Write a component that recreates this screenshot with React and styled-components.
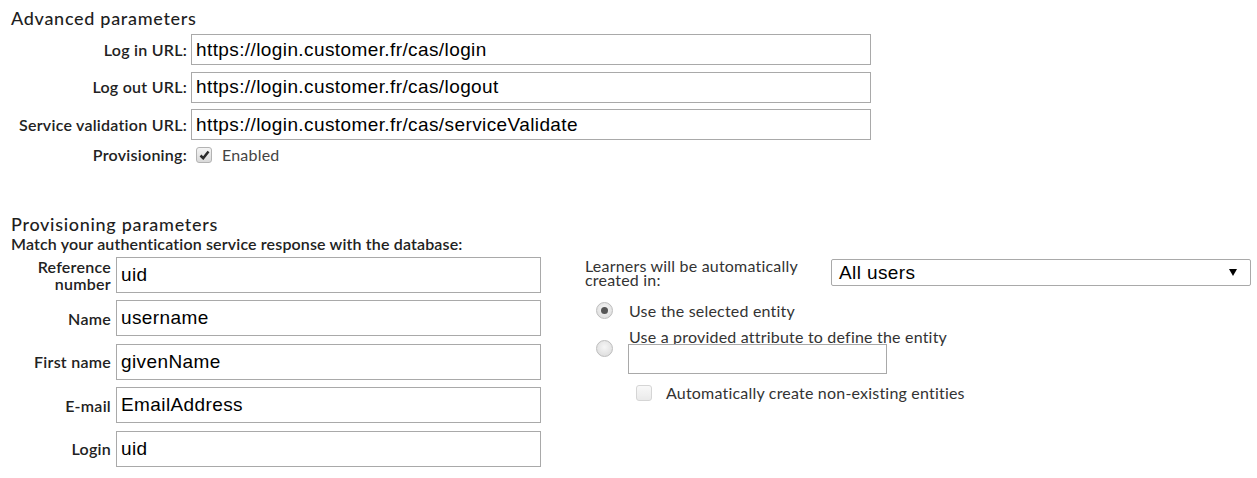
import React from "react";
import styled, { createGlobalStyle } from "styled-components";

const GlobalStyle = createGlobalStyle`
  body {
    margin: 0;
    background: #fff;
    font-family: Lato, "Liberation Sans", sans-serif;
    color: #222;
  }
`;

const Page = styled.div`
  padding: 8px 6px 0 11px;
  width: 1240px;
  box-sizing: border-box;
`;

const Heading = styled.div`
  font-size: 18px;
  font-weight: 500;
  line-height: 21px;
  letter-spacing: 0.7px;
  color: #1e1e1e;
`;

const SubHeading = styled.div`
  font-size: 16px;
  line-height: 17px;
  font-weight: 600;
  letter-spacing: 0.15px;
  color: #222;
`;

const TopForm = styled.div`
  display: grid;
  grid-template-columns: 176px 680px;
  column-gap: 4px;
  row-gap: 6.5px;
  margin-top: 5px;
  align-items: center;
`;

const Label = styled.label`
  font-size: 16px;
  font-weight: 600;
  letter-spacing: 0.25px;
  color: #222;
  text-align: right;
  line-height: ${(p) => p.$lh || 16}px;
`;

const TextInput = styled.input`
  box-sizing: border-box;
  width: 100%;
  height: ${(p) => p.$h || 31}px;
  border: 1px solid #a9a9a9;
  padding: 0 4px;
  margin: 0;
  font-family: Arial, "Liberation Sans", sans-serif;
  font-size: 19px;
  letter-spacing: 0.4px;
  color: #000;
  background: #fff;
  outline: none;
`;

const CheckRow = styled.div`
  display: flex;
  align-items: center;
  gap: 10px;
  padding-left: 5px;
  font-size: 16px;
  letter-spacing: 0.2px;
  color: #444;
  height: 15px;
`;

const Checkbox = styled.span`
  box-sizing: border-box;
  width: 16px;
  height: 16px;
  border: 1px solid #b3b3b3;
  border-radius: 3px;
  background: linear-gradient(#f4f4f4, #d9d9d9);
  display: inline-flex;
  align-items: center;
  justify-content: center;
  flex-shrink: 0;
  opacity: ${(p) => (p.$disabled ? 0.55 : 1)};
`;

const Spacer = styled.div`
  height: ${(p) => p.$h}px;
`;

const Lower = styled.div`
  display: flex;
  gap: 44px;
  margin-top: 5px;
`;

const MapForm = styled.div`
  display: grid;
  grid-template-columns: 100px 425px;
  column-gap: 5px;
  row-gap: 7.5px;
  align-items: center;
`;

const Options = styled.div`
  width: 666px;
  padding-top: 2px;
`;

const CreatedRow = styled.div`
  display: flex;
  align-items: center;
  gap: 16px;
`;

const PlainText = styled.div`
  font-size: 16px;
  line-height: 14px;
  letter-spacing: 0.2px;
  color: #333;
  width: 230px;
`;

const SelectBox = styled.div`
  box-sizing: border-box;
  width: 420px;
  height: 27px;
  border: 1px solid #a9a9a9;
  border-radius: 2px;
  display: flex;
  align-items: center;
  justify-content: space-between;
  padding: 0 13px 0 7px;
  font-family: Arial, "Liberation Sans", sans-serif;
  font-size: 19px;
  letter-spacing: 0.4px;
  color: #000;
`;

const RadioRow = styled.div`
  display: flex;
  align-items: flex-start;
  gap: 16px;
  padding-left: 11px;
  margin-top: ${(p) => p.$mt || 0}px;
  font-size: 16px;
  line-height: 20px;
  letter-spacing: 0.2px;
  color: #333;
`;

const Radio = styled.span`
  box-sizing: border-box;
  width: 17px;
  height: 17px;
  margin-top: ${(p) => p.$offset || 1.5}px;
  border-radius: 50%;
  border: 1px solid #bdbdbd;
  background: radial-gradient(circle at 50% 40%, #f6f6f6, #d8d8d8);
  display: inline-flex;
  align-items: center;
  justify-content: center;
  flex-shrink: 0;
  &::after {
    content: "";
    width: 7px;
    height: 7px;
    border-radius: 50%;
    background: ${(p) => (p.$checked ? "#555" : "transparent")};
  }
`;

const AttrBlock = styled.div`
  display: flex;
  flex-direction: column;
  line-height: 14px;
`;

const SmallInput = styled(TextInput)`
  width: 259px;
  height: 30px;
  margin-left: -1px;
`;

const AutoRow = styled.div`
  display: flex;
  align-items: center;
  gap: 14px;
  height: 20px;
  padding-left: 51px;
  margin-top: 9px;
  font-size: 16px;
  letter-spacing: 0.2px;
  color: #333;
`;

const Arrow = () => (
  <svg width="8" height="7" viewBox="0 0 8 7">
    <path d="M0 0 H8 L4 7 Z" fill="#000" />
  </svg>
);

const Tick = () => (
  <svg width="11" height="10" viewBox="0 0 11 10">
    <path d="M1.5 5.5 L4.2 8.2 L9.5 1.5" stroke="#2a2a2a" strokeWidth="2.5" fill="none" />
  </svg>
);

const mapping = [
  { label: ["Reference", "number"], value: "uid" },
  { label: ["Name"], value: "username" },
  { label: ["First name"], value: "givenName" },
  { label: ["E-mail"], value: "EmailAddress" },
  { label: ["Login"], value: "uid" },
];

export default function App() {
  return (
    <Page>
      <GlobalStyle />
      <Heading>Advanced parameters</Heading>
      <TopForm>
        <Label>Log in URL:</Label>
        <TextInput readOnly value="https://login.customer.fr/cas/login" />
        <Label>Log out URL:</Label>
        <TextInput readOnly value="https://login.customer.fr/cas/logout" />
        <Label>Service validation URL:</Label>
        <TextInput readOnly value="https://login.customer.fr/cas/serviceValidate" />
        <Label>Provisioning:</Label>
        <CheckRow>
          <Checkbox>
            <Tick />
          </Checkbox>
          Enabled
        </CheckRow>
      </TopForm>

      <Spacer $h={51} />
      <Heading>Provisioning parameters</Heading>
      <SubHeading>Match your authentication service response with the database:</SubHeading>

      <Lower>
        <MapForm>
          {mapping.map((m) => (
            <React.Fragment key={m.label.join(" ")}>
              <Label $lh={17}>
                {m.label.map((l) => (
                  <div key={l}>{l}</div>
                ))}
              </Label>
              <TextInput readOnly $h={36} value={m.value} />
            </React.Fragment>
          ))}
        </MapForm>

        <Options>
          <CreatedRow>
            <PlainText>Learners will be automatically created in:</PlainText>
            <SelectBox>
              <span>All users</span>
              <Arrow />
            </SelectBox>
          </CreatedRow>
          <RadioRow $mt={14}>
            <Radio $checked />
            Use the selected entity
          </RadioRow>
          <RadioRow $mt={9}>
            <Radio $offset={10.5} />
            <AttrBlock>
              <span>Use a provided attribute to define the entity</span>
              <SmallInput readOnly value="" />
            </AttrBlock>
          </RadioRow>
          <AutoRow>
            <Checkbox $disabled />
            Automatically create non-existing entities
          </AutoRow>
        </Options>
      </Lower>
    </Page>
  );
}
